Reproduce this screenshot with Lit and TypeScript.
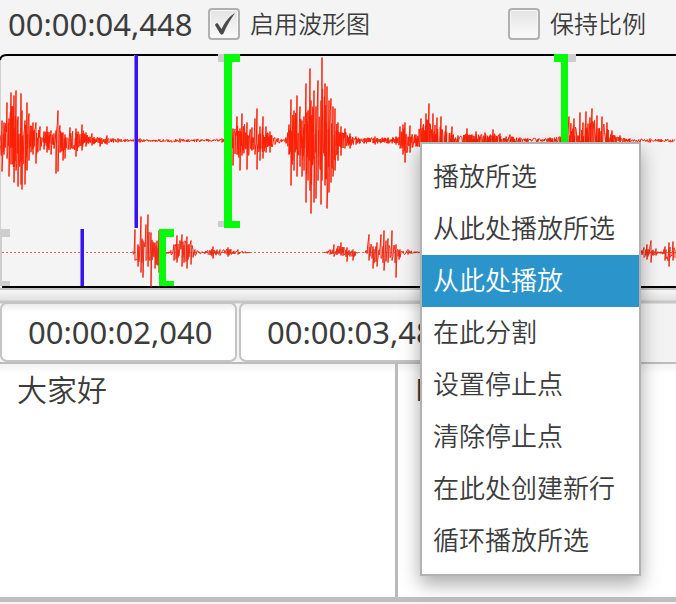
import { LitElement, html, svg, css } from "lit";
import { customElement, property, state } from "lit/decorators.js";
import { classMap } from "lit/directives/class-map.js";

type Peak = [x: number, up: number, down: number];

// Peaks of the zoomed-in track: position, height above and below the axis.
const DETAIL: Peak[] = [
  [0, 5, 6], [2, 20, 31], [4, 18, 14], [7, 38, 18], [9, 22, 36], [11, 48, 24], [14, 45, 42], [16, 50, 30],
  [18, 24, 46], [21, 47, 44], [22, 30, 49], [25, 20, 44], [27, 38, 30], [29, 27, 20], [33, 18, 14],
  [36, 18, 23], [40, 14, 10], [44, 9, 9], [47, 14, 12], [51, 10, 14], [54, 7, 8], [56, 10, 33],
  [58, 30, 31], [60, 15, 12], [63, 8, 20], [65, 6, 18], [70, 13, 9], [76, 12, 16], [82, 16, 10],
  [86, 8, 6], [92, 7, 5], [100, 3, 6], [107, 5, 4], [118, 2, 2], [140, 2, 2], [180, 2, 2], [222, 2, 2], [230, 3, 3],
  [233, 12, 25], [237, 24, 14], [240, 12, 30], [242, 27, 15], [247, 18, 29], [252, 13, 10], [255, 22, 14],
  [257, 32, 29], [260, 14, 20], [263, 24, 18], [266, 14, 12], [270, 9, 12], [275, 3, 4], [286, 3, 3],
  [289, 16, 14], [291, 41, 45], [294, 30, 30], [297, 45, 36], [300, 34, 26], [302, 20, 36], [304, 24, 30],
  [306, 57, 62], [308, 30, 40], [310, 72, 50], [311, 40, 73], [314, 50, 62], [316, 34, 58], [318, 60, 40],
  [321, 40, 64], [322, 83, 40], [325, 57, 45], [327, 54, 68], [329, 40, 52], [331, 42, 42], [333, 34, 36],
  [335, 32, 30], [338, 18, 20], [341, 14, 15], [345, 12, 8], [350, 7, 8], [356, 4, 4], [375, 4, 4],
  [396, 4, 4], [400, 14, 8], [403, 16, 14], [405, 18, 22], [410, 15, 12], [416, 6, 6], [421, 22, 14],
  [426, 27, 16], [429, 37, 18], [433, 27, 14], [437, 23, 12], [441, 24, 12], [446, 15, 10], [452, 14, 8],
  [458, 5, 4], [467, 12, 5], [472, 6, 4], [476, 9, 4], [485, 8, 4], [493, 11, 5], [500, 7, 3], [510, 6, 2],
  [520, 3, 2], [550, 3, 2], [563, 8, 4], [569, 24, 6], [574, 22, 6], [580, 28, 6], [583, 18, 6], [586, 29, 6],
  [592, 32, 6], [597, 25, 6], [602, 24, 6], [607, 18, 5], [612, 10, 4], [620, 5, 2], [630, 2, 2], [650, 2, 2],
  [676, 2, 2],
];

// Peaks of the overview track; between two zero peaks there is silence.
const OVERVIEW: Peak[] = [
  [133, 1, 1], [135, 23, 8], [138, 8, 14], [141, 36, 20], [143, 12, 25], [146, 28, 8], [148, 38, 14],
  [151, 20, 34], [155, 10, 16], [159, 22, 20], [163, 2, 2], [171, 2, 2], [174, 8, 8], [177, 17, 10],
  [182, 18, 14], [187, 16, 16], [191, 12, 12], [195, 3, 3], [208, 2, 2], [213, 6, 6], [220, 3, 3],
  [228, 5, 4], [238, 3, 2], [250, 0, 0], [324, 0, 0], [330, 3, 2], [334, 8, 4], [341, 10, 3], [347, 5, 9],
  [353, 3, 8], [358, 0, 0], [365, 0, 0], [369, 18, 8], [373, 6, 16], [377, 10, 14], [381, 18, 6],
  [384, 22, 18], [388, 14, 10], [392, 22, 8], [396, 8, 25], [400, 3, 5], [408, 3, 2], [424, 0, 0],
  [636, 0, 0], [644, 5, 5], [647, 8, 7], [651, 12, 10], [656, 4, 3], [661, 1, 1], [665, 6, 8],
  [669, 10, 14], [673, 11, 8], [676, 9, 8],
];

// Repeatable pseudo-random sequence, so that the trace is the same at every render.
function sequence(seed: number) {
  let s = seed;
  return () => {
    s = (s * 16807) % 2147483647;
    return s / 2147483647;
  };
}

function tracePath(peaks: Peak[], axis: number, density: number): string {
  const rnd = sequence(41);
  let d = `M${peaks[0][0]} ${axis}`;
  for (let i = 0; i < peaks.length - 1; i++) {
    const [x0, u0, d0] = peaks[i];
    const [x1, u1, d1] = peaks[i + 1];
    d += `L${x0} ${axis - u0}L${x0} ${axis + d0}`;
    if (u0 === 0 && u1 === 0) {
      d += `M${x1} ${axis}`;
      continue;
    }
    const quiet = u0 < 4 && u1 < 4;
    const steps = Math.max(1, Math.round((x1 - x0) * (quiet ? 0.9 : density)));
    for (let k = 1; k < steps; k++) {
      const t = k / steps;
      const up = (u0 + (u1 - u0) * t) * (0.15 + rnd() * 0.6);
      const down = (d0 + (d1 - d0) * t) * (0.15 + rnd() * 0.6);
      const x = (x0 + (x1 - x0) * t).toFixed(1);
      const side = rnd();
      if (side < 0.75) d += `L${x} ${(axis - up).toFixed(1)}`;
      if (side > 0.25) d += `L${x} ${(axis + down).toFixed(1)}`;
    }
  }
  return d;
}

@customElement("wave-view")
export class WaveView extends LitElement {
  static styles = css`
    :host {
      display: block;
      height: 236px;
      background: #f4f4f4;
      border-bottom: 2px solid #c2c2c2;
      box-sizing: border-box;
    }
    svg {
      display: block;
      width: 100%;
      height: 234px;
    }
    .frame { fill: none; stroke: #000; stroke-width: 2; }
    .edge { stroke: #d2d2d2; stroke-width: 1; }
    .trace { fill: none; stroke: #fb2106; stroke-width: 1; stroke-linejoin: bevel; }
    .fine { stroke: #ee2a14; }
    .dotted { stroke: #d06a64; stroke-width: 1; stroke-dasharray: 2 2; }
    .cursor { fill: #3a12f2; }
    .halo { fill: #8c7cf4; }
    .bound { fill: #06fb0a; }
    .ghost { fill: #cdcdcd; }
  `;

  render() {
    return html`
      <svg viewBox="0 0 676 234" preserveAspectRatio="none" role="img" aria-label="波形图">
        <path class="edge" d="M0.5 6V228" />
        <path class="frame" d="M0 6Q1 1 7 1H676M2 233H676" />
        ${svg`
          <path class="trace" d=${tracePath(DETAIL, 86.5, 1.5)} />
          <path class="dotted" d="M2 198.5H676" />
          <path class="trace fine" d=${tracePath(OVERVIEW, 198.5, 1)} />
        `}
        <path class="ghost" d="M218 0h8v8h-8zM218 167h8v6h-8zM568 0h8v8h-8z" />
        <path class="halo" d="M134 1h4v173h-4zM80 175h4v57h-4z" />
        <path class="cursor" d="M135 1h3v173h-3zM81 175h3v57h-3z" />
        <path class="ghost" d="M0 175h10v8h-8v44h8v5h-10z" />
        <path class="bound" d="M224 0h16v8h-8v159h8v7h-16z" />
        <path class="bound" d="M554 0h14v100h-7v-92h-7z" />
        <path class="bound" d="M159 175h15v8h-8v44h8v5h-15z" />
      </svg>
    `;
  }
}

@customElement("context-menu")
export class ContextMenu extends LitElement {
  @property({ type: Array }) items: string[] = [];
  @property({ type: Number }) active = -1;

  static styles = css`
    :host {
      display: block;
      box-sizing: border-box;
      padding: 7px 0;
      background: #fff;
      border: 2px solid #b2b2b2;
      box-shadow: 0 8px 18px rgba(0, 0, 0, 0.34);
    }
    ul { margin: 0; padding: 0; list-style: none; }
    button {
      display: block;
      box-sizing: border-box;
      width: 100%;
      height: 52px;
      margin: 0;
      padding: 0 11px 4px;
      border: 0;
      background: none;
      color: #3c3c3c;
      font: 350 26px/48px "Noto Sans CJK SC", sans-serif;
      text-align: left;
      white-space: nowrap;
    }
    .active { background: #2a94cb; color: #fff; }
  `;

  render() {
    return html`
      <ul role="menu">
        ${this.items.map(
          (item, i) => html`
            <li role="none">
              <button
                role="menuitem"
                class=${classMap({ active: i === this.active })}
                @mouseenter=${() => (this.active = i)}
              >${item}</button>
            </li>
          `
        )}
      </ul>
    `;
  }
}

@customElement("app-root")
export class AppRoot extends LitElement {
  @state() private showWave = true;
  @state() private keepRatio = false;

  static styles = css`
    :host {
      display: flex;
      flex-direction: column;
      position: relative;
      min-height: 100vh;
      overflow: hidden;
      background: #f4f4f4;
      color: #3c3c3c;
      font-family: "Noto Sans", "Noto Sans CJK SC", sans-serif;
    }
    .toolbar {
      display: flex;
      align-items: center;
      height: 54px;
      padding: 0 8px 6px;
      box-sizing: border-box;
    }
    .clock { width: 200px; font-size: 31px; line-height: 40px; }
    .option {
      display: flex;
      align-items: center;
      gap: 10px;
      width: 300px;
      font: 350 24px/36px "Noto Sans CJK SC", sans-serif;
      white-space: nowrap;
    }
    .option:last-child { width: auto; }
    .text { padding-bottom: 2px; }
    .box { display: grid; }
    .box input, .box svg { grid-area: 1 / 1; width: 32px; height: 32px; }
    .box input {
      appearance: none;
      box-sizing: border-box;
      margin: 0;
      border: 2px solid #b0b0b0;
      border-radius: 4px;
      background: linear-gradient(#e4e4e4, #fafafa);
      box-shadow: inset 0 0 0 1px #f6f6f6;
    }
    .box svg { pointer-events: none; fill: #4a4a4a; }
    .times {
      display: flex;
      gap: 2px;
      padding-top: 12px;
      height: 74px;
      box-sizing: border-box;
      background: linear-gradient(#f6f6f6, #e2e2e2 10px, #c6c6c6 11px, #c6c6c6 13px, #f3f3f3 14px);
      border-bottom: 2px solid #bcbcbc;
    }
    .times input {
      width: 237px;
      height: 60px;
      box-sizing: border-box;
      margin: 0;
      padding: 0 16px 0 26px;
      border: 2px solid #c4c4c4;
      border-radius: 7px;
      background: linear-gradient(#ececec, #fff 8px);
      color: inherit;
      font: 31px/40px "Noto Sans", sans-serif;
    }
    .editors { display: flex; flex: 1; border-bottom: 5px solid #bfbfbf; margin-bottom: 2px; }
    textarea {
      flex: 1 1 0;
      min-width: 0;
      box-sizing: border-box;
      margin: 0;
      padding: 2px 17px;
      border: 0;
      outline: 0;
      resize: none;
      background: linear-gradient(#f3f3f3, #fff 10px);
      color: inherit;
      font: 350 30px/44px "Noto Sans CJK SC", sans-serif;
    }
    .source { flex: 0 0 398px; border-right: 3px solid #bababa; }
    context-menu { position: absolute; left: 420px; top: 142px; width: 221px; }
  `;

  render() {
    return html`
      <header class="toolbar">
        <time class="clock">00:00:04,448</time>
        <label class="option">
          <span class="box">
            <input
              type="checkbox"
              .checked=${this.showWave}
              @change=${(e: Event) => (this.showWave = (e.target as HTMLInputElement).checked)}
            />
            ${this.showWave
              ? html`<svg viewBox="0 0 32 32" aria-hidden="true">
                  <path d="M7 17C8 14.500 10 15 10.500 16.500L13.500 21C17 14 21 8.500 27 5C23 11 19 17 15.500 25.500C14.500 27 13 27 12 25.500Z" />
                </svg>`
              : null}
          </span>
          <span class="text">启用波形图</span>
        </label>
        <label class="option">
          <span class="box">
            <input
              type="checkbox"
              .checked=${this.keepRatio}
              @change=${(e: Event) => (this.keepRatio = (e.target as HTMLInputElement).checked)}
            />
          </span>
          <span class="text">保持比例</span>
        </label>
      </header>
      <wave-view></wave-view>
      <div class="times">
        <input type="text" aria-label="开始时间" .value=${"00:00:02,040"} />
        <input type="text" aria-label="结束时间" .value=${"00:00:03,480"} />
      </div>
      <div class="editors">
        <textarea class="source" aria-label="原文" .value=${"大家好"}></textarea>
        <textarea aria-label="译文" .value=${"Hello"}></textarea>
      </div>
      <context-menu
        .items=${["播放所选", "从此处播放所选", "从此处播放", "在此分割", "设置停止点", "清除停止点", "在此处创建新行", "循环播放所选"]}
        .active=${2}
      ></context-menu>
    `;
  }
}
